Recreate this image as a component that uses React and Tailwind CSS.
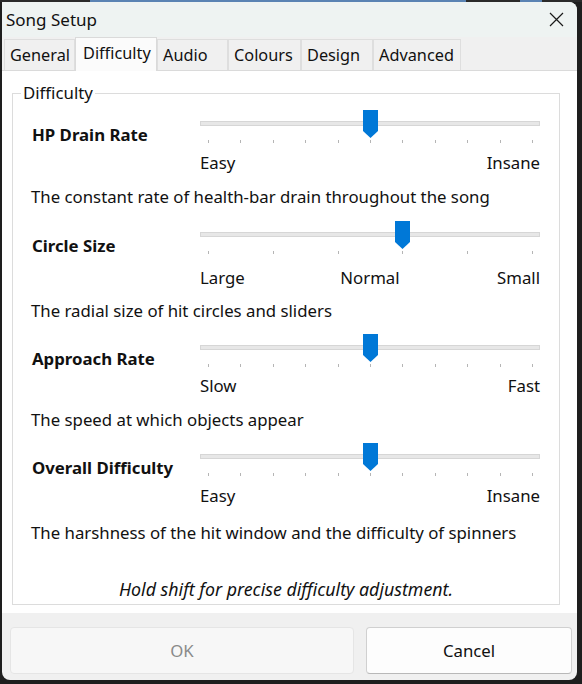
import React from "react";

const sections = [
  {
    name: "HP Drain Rate",
    ticks: 11,
    value: 5,
    max: 10,
    labels: ["Easy", "Insane"],
    desc: "The constant rate of health-bar drain throughout the song",
    mt: "mt-0",
    scaleMt: "mt-[8px]",
    descMt: "mt-[10px]",
  },
  {
    name: "Circle Size",
    ticks: 6,
    value: 3,
    max: 5,
    labels: ["Large", "Normal", "Small"],
    desc: "The radial size of hit circles and sliders",
    mt: "mt-[12px]",
    scaleMt: "mt-[12px]",
    descMt: "mt-[9px]",
  },
  {
    name: "Approach Rate",
    ticks: 11,
    value: 5,
    max: 10,
    labels: ["Slow", "Fast"],
    desc: "The speed at which objects appear",
    mt: "mt-[11px]",
    scaleMt: "mt-[7px]",
    descMt: "mt-[10px]",
  },
  {
    name: "Overall Difficulty",
    ticks: 11,
    value: 5,
    max: 10,
    labels: ["Easy", "Insane"],
    desc: "The harshness of the hit window and the difficulty of spinners",
    mt: "mt-[11px]",
    scaleMt: "mt-[8px]",
    descMt: "mt-[13px]",
  },
];

const tabs = [
  { label: "General", w: "w-[71px]" },
  { label: "Difficulty", w: "w-[82px]", active: true },
  { label: "Audio", w: "w-[71px]" },
  { label: "Colours", w: "w-[73px]" },
  { label: "Design", w: "w-[72px]" },
  { label: "Advanced", w: "w-[88px]" },
];

const Slider = ({ ticks, value, max }) => {
  const left = 8 + (324 * value) / max - 7;
  return (
    <div className="relative w-[340px] h-[33px]">
      {/* track */}
      <div className="absolute top-[11px] left-0 right-0 h-[5px] bg-[#e7e7e7] border border-[#d6d6d6]"></div>
      {/* ticks */}
      <div className="absolute top-[30px] left-[8px] w-[325px] h-[3px] flex justify-between">
        {Array.from({ length: ticks }).map((_, i) => (
          <div key={i} className="w-px h-[3px] bg-[#b5b5b5]"></div>
        ))}
      </div>
      {/* thumb */}
      <svg
        className="absolute top-0"
        style={{ left }}
        width="15"
        height="28"
        viewBox="0 0 15 28"
      >
        <polygon points="0,0 15,0 15,21 7.5,28 0,21" fill="#0078d7" />
      </svg>
    </div>
  );
};

const Section = ({ s }) => (
  <div className={s.mt}>
    <div className="flex h-[33px]">
      <div className="w-[187px] pl-[19px] pt-[13px] font-bold leading-[24px] whitespace-nowrap">
        {s.name}
      </div>
      <Slider ticks={s.ticks} value={s.value} max={s.max} />
    </div>
    {s.labels.length === 3 ? (
      <div className={`ml-[187px] w-[340px] grid grid-cols-3 ${s.scaleMt}`}>
        <span className="text-left">{s.labels[0]}</span>
        <span className="text-center">{s.labels[1]}</span>
        <span className="text-right">{s.labels[2]}</span>
      </div>
    ) : (
      <div className={`ml-[187px] w-[340px] flex justify-between ${s.scaleMt}`}>
        <span>{s.labels[0]}</span>
        <span>{s.labels[1]}</span>
      </div>
    )}
    <div className={`pl-[18px] whitespace-nowrap ${s.descMt}`}>{s.desc}</div>
  </div>
);

export default function App() {
  return (
    <div className="w-[582px] h-[684px] bg-[#1e1e1e] overflow-hidden font-['Noto_Sans',sans-serif] text-[16.8px] leading-[24px] text-[#111]">
      {/* desktop strip behind the window */}
      <div className="flex h-[2px]">
        <div className="w-[90px] bg-[#2a2a2a]"></div>
        <div className="w-[376px] bg-[#5a83b3]"></div>
        <div className="w-[54px] bg-[#2a2a2a]"></div>
        <div className="w-[22px] bg-[#5a83b3]"></div>
        <div className="flex-1 bg-[#2a2a2a]"></div>
      </div>

      <div className="ml-[2px] w-[575px] h-[678px] bg-[#f0f0f0] rounded-tr-[8px] rounded-b-[8px] overflow-hidden flex flex-col">
        {/* title bar */}
        <div className="h-[35px] bg-[#eef3f2] flex items-center justify-between pl-[4px] pr-[13px]">
          <span className="text-[17px]">Song Setup</span>
          <svg width="15" height="15" viewBox="0 0 15 15">
            <path d="M1 1 L14 14 M14 1 L1 14" stroke="#1a1a1a" strokeWidth="1.2" />
          </svg>
        </div>

        {/* tabs */}
        <div className="h-[33px] flex items-end pl-[2px] bg-[#f0f0f0] text-[16.3px]">
          {tabs.map((t) =>
            t.active ? (
              <div
                key={t.label}
                className={`${t.w} h-[34px] -mb-px z-10 bg-[#fbfbfb] border border-b-0 border-[#dadada] px-[7px] leading-[30px] whitespace-nowrap`}
              >
                {t.label}
              </div>
            ) : (
              <div
                key={t.label}
                className={`${t.w} h-[31px] bg-[#f0f0f0] border border-b-0 border-[#dedede] px-[5px] leading-[31px] whitespace-nowrap`}
              >
                {t.label}
              </div>
            )
          )}
        </div>

        {/* page */}
        <div className="h-[543px] bg-white border-t border-[#dadada] pt-[10px] pl-[10px] pr-[17px]">
          <fieldset className="border border-[#dcdcdc]">
            <legend className="ml-[8px] px-[2px] leading-[24px]">Difficulty</legend>
            <div className="pt-[5px]">
              {sections.map((s) => (
                <Section key={s.name} s={s} />
              ))}
              <div className="mt-[32px] pb-[3px] text-center italic text-[17.8px]">
                Hold shift for precise difficulty adjustment.
              </div>
            </div>
          </fieldset>
        </div>

        {/* buttons */}
        <div className="flex-1 flex gap-[12px] pl-[8px] pr-[5px] pt-[14px] pb-[5px]">
          <button className="w-[344px] h-[47px] rounded-[4px] bg-[#f7f7f7] border border-[#e5e5e5] text-[#8a8a8a]">
            OK
          </button>
          <button className="w-[206px] h-[47px] rounded-[4px] bg-[#fdfdfd] border border-[#d0d0d0] border-b-[#b8b8b8] text-[#111]">
            Cancel
          </button>
        </div>
      </div>
    </div>
  );
}
